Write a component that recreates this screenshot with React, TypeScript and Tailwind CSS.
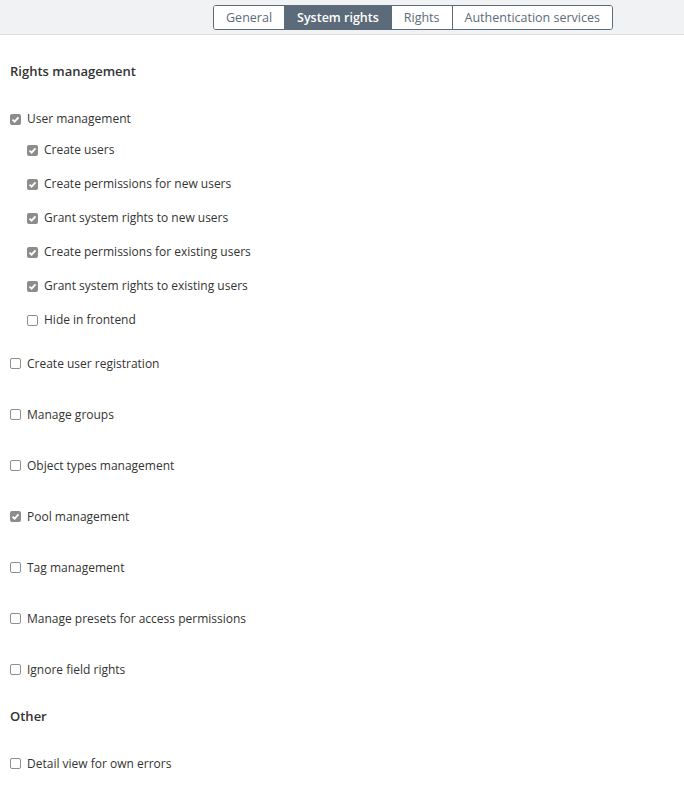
import { useState } from "react";

const tabs = ["General", "System rights", "Rights", "Authentication services"];

type Item = { label: string; checked: boolean };

const userSub: Item[] = [
  { label: "Create users", checked: true },
  { label: "Create permissions for new users", checked: true },
  { label: "Grant system rights to new users", checked: true },
  { label: "Create permissions for existing users", checked: true },
  { label: "Grant system rights to existing users", checked: true },
  { label: "Hide in frontend", checked: false },
];

const mainItems: Item[] = [
  { label: "Create user registration", checked: false },
  { label: "Manage groups", checked: false },
  { label: "Object types management", checked: false },
  { label: "Pool management", checked: true },
  { label: "Tag management", checked: false },
  { label: "Manage presets for access permissions", checked: false },
  { label: "Ignore field rights", checked: false },
];

const Check = ({ label, checked }: Item) => {
  const [on, setOn] = useState(checked);
  return (
    <label className="flex items-center gap-[6px] cursor-pointer select-none" onClick={() => setOn(!on)}>
      {on ? (
        <span className="flex h-[11px] w-[11px] items-center justify-center rounded-[2px] bg-[#8c8c8c]">
          <svg width="9" height="9" viewBox="0 0 9 9">
            <path d="M1.5 4.6 L3.6 6.6 L7.5 2.3" fill="none" stroke="white" strokeWidth="1.9" />
          </svg>
        </span>
      ) : (
        <span className="h-[11px] w-[11px] rounded-[2px] border border-[#8f8f8f] bg-white" />
      )}
      <span className="text-[12px] text-[#333]">{label}</span>
    </label>
  );
};

export default function App() {
  const [active, setActive] = useState(1);

  return (
    <div className="min-h-screen bg-white" style={{ fontFamily: '"Open Sans", "Noto Sans", sans-serif' }}>
      <div className="flex h-[35px] justify-center border-b border-[#d8dfe4] bg-[#f1f2f4] pl-[142px] pt-[5px]">
        <div className="flex h-[25px] overflow-hidden rounded-[3px] border border-[#5b6b79]">
          {tabs.map((t, i) => (
            <button
              key={t}
              onClick={() => setActive(i)}
              className={
                "flex items-center px-[12px] pt-[2px] text-[12.5px] leading-none " +
                (i > 0 ? "border-l border-[#5b6b79] " : "") +
                (i === active ? "bg-[#5b6b79] font-semibold text-white" : "bg-white text-[#5b6b79]")
              }
            >
              {t}
            </button>
          ))}
        </div>
      </div>

      <div className="pl-[10px]">
        <div className="mt-[25px] flex h-[24px] items-center text-[13px] font-semibold text-[#333]">Rights management</div>

        <div className="mt-[21px] flex h-[28px] items-center">
          <Check label="User management" checked />
        </div>
        <div className="pl-[17px]">
          {userSub.map((it) => (
            <div key={it.label} className="flex h-[34px] items-center">
              <Check {...it} />
            </div>
          ))}
        </div>

        <div className="mt-[1px]">
          {mainItems.map((it) => (
            <div key={it.label} className="flex h-[51px] items-center">
              <Check {...it} />
            </div>
          ))}
        </div>

        <div className="mt-[10px] flex h-[24px] items-center text-[13px] font-semibold text-[#333]">Other</div>
        <div className="mt-[9px] flex h-[51px] items-center">
          <Check label="Detail view for own errors" checked={false} />
        </div>
      </div>
    </div>
  );
}
